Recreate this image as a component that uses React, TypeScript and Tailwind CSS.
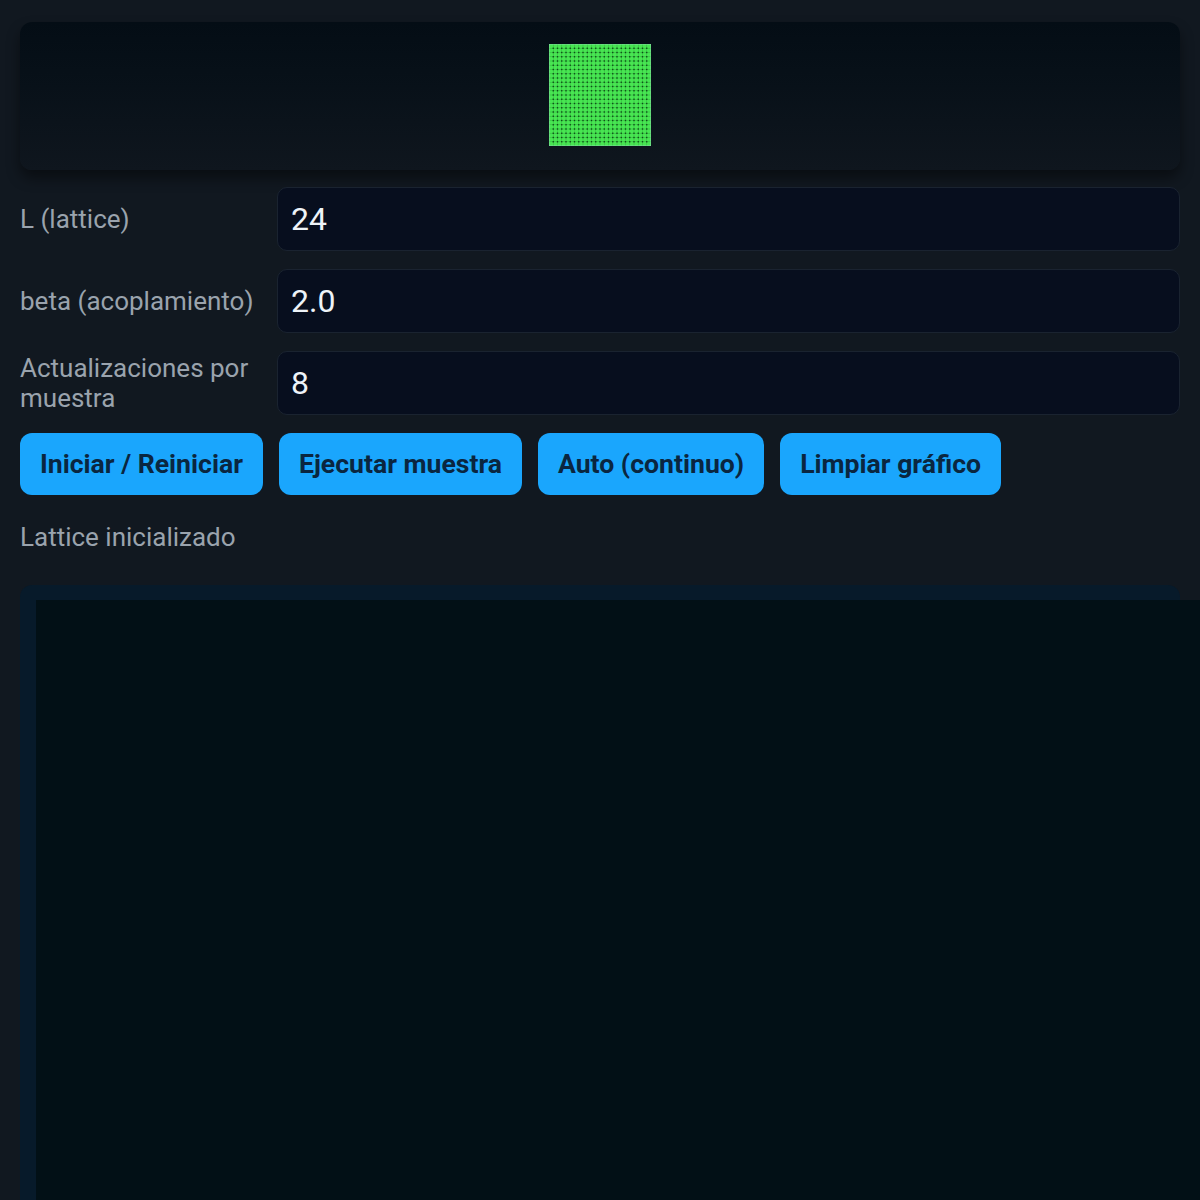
import { useState } from "react";

const L = 24;

// small lattice preview: green spins, dark specks where the cell corners meet
const LatticeView = () => {
  const dots = [];
  for (let y = 1; y < L; y++) {
    for (let x = 1; x < L; x++) {
      dots.push(<rect key={`${x}-${y}`} x={x - 0.16} y={y - 0.16} width={0.32} height={0.32} fill="#0f4a18" />);
    }
  }
  const lines = [];
  for (let i = 1; i < L; i++) {
    lines.push(<rect key={`v${i}`} x={i - 0.06} y={0} width={0.12} height={L} fill="#1b8a2a" opacity={0.5} />);
    lines.push(<rect key={`h${i}`} x={0} y={i - 0.06} width={L} height={0.12} fill="#1b8a2a" opacity={0.5} />);
  }
  return (
    <svg width={102} height={102} viewBox={`0 0 ${L} ${L}`} className="block">
      <rect x={0} y={0} width={L} height={L} fill="#48e552" />
      {lines}
      {dots}
      <rect x={0.05} y={0.05} width={L - 0.1} height={L - 0.1} fill="none" stroke="#8fd6b4" strokeWidth={0.1} />
    </svg>
  );
};

const App = () => {
  const [size, setSize] = useState("24");
  const [beta, setBeta] = useState("2.0");
  const [steps, setSteps] = useState("8");

  const fields = [
    { label: "L (lattice)", value: size, set: setSize },
    { label: "beta (acoplamiento)", value: beta, set: setBeta },
    { label: "Actualizaciones por muestra", value: steps, set: setSteps },
  ];

  const buttons = ["Iniciar / Reiniciar", "Ejecutar muestra", "Auto (continuo)", "Limpiar gráfico"];

  return (
    <div className="min-h-[1200px] w-full overflow-hidden bg-[#111820] px-5 pt-[22px] font-['Roboto',sans-serif]">
      <div className="flex h-[148px] w-full items-start justify-center rounded-xl bg-gradient-to-b from-[#040d15] to-[#0f161e] pt-[22px] shadow-[0_8px_14px_rgba(0,0,0,0.45)]">
        <LatticeView />
      </div>

      <div className="mt-[17px] grid grid-cols-[257px_1fr] items-center gap-y-[18px]">
        {fields.map((f, i) => (
          <div key={i} className="contents">
            <label className="pr-2 text-[26px] leading-[30px] text-[#9aa3ad]">{f.label}</label>
            <input
              value={f.value}
              onChange={(e) => f.set(e.target.value)}
              className="h-16 w-full rounded-[10px] border border-[#1a2330] bg-[#070e1e] px-[13px] text-[32px] text-[#eef3f8] outline-none"
            />
          </div>
        ))}
      </div>

      <div className="mt-[18px] flex gap-4">
        {buttons.map((b, i) => (
          <button
            key={i}
            className="h-[62px] rounded-xl bg-[#1aa6fd] px-5 text-[26.6px] font-bold text-[#0a2640]"
          >
            {b}
          </button>
        ))}
      </div>

      <div className="mt-[27px] text-[26px] leading-[30px] text-[#9aa3ad]">Lattice inicializado</div>

      <div className="mt-[33px] w-full rounded-t-xl bg-[#071a2a] pl-4 pt-[15px]">
        <div className="h-[700px] w-[1200px] bg-[#021016]" />
      </div>
    </div>
  );
};

export default App;
